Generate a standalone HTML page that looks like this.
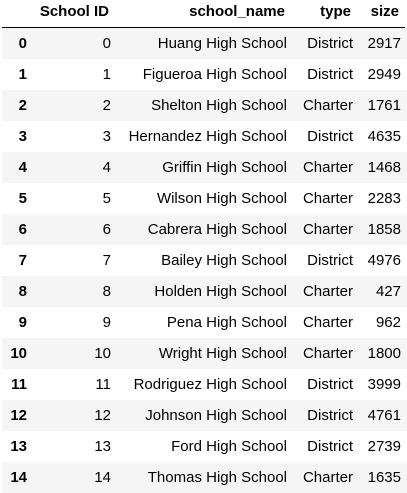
<!DOCTYPE html>
<html><head><style>
body{margin:0;background:#fff;font-family:"Liberation Sans",Arial,sans-serif;font-size:15px;color:#000;width:407px;height:490px;overflow:hidden;position:relative}
.row{position:absolute;left:2px;width:405px;height:31px;line-height:31px}
.g{background:#f5f5f5}
.row span{position:absolute;text-align:right;white-space:nowrap}
.h{font-weight:bold}
.c0{right:380px}.c1{right:296px}.c2{right:120px}.c3{right:54px}.c4{right:6px}
</style></head><body>
<div class="row h" style="top:-3px;height:30px;line-height:30px;border-bottom:1px solid #000;width:403px">
<span class="c1">School ID</span><span class="c2">school_name</span><span class="c3">type</span><span class="c4">size</span></div>
<div class="row g" style="top:28px"><span class="c0 h">0</span><span class="c1">0</span><span class="c2">Huang High School</span><span class="c3">District</span><span class="c4">2917</span></div>
<div class="row" style="top:59px"><span class="c0 h">1</span><span class="c1">1</span><span class="c2">Figueroa High School</span><span class="c3">District</span><span class="c4">2949</span></div>
<div class="row g" style="top:90px"><span class="c0 h">2</span><span class="c1">2</span><span class="c2">Shelton High School</span><span class="c3">Charter</span><span class="c4">1761</span></div>
<div class="row" style="top:121px"><span class="c0 h">3</span><span class="c1">3</span><span class="c2">Hernandez High School</span><span class="c3">District</span><span class="c4">4635</span></div>
<div class="row g" style="top:152px"><span class="c0 h">4</span><span class="c1">4</span><span class="c2">Griffin High School</span><span class="c3">Charter</span><span class="c4">1468</span></div>
<div class="row" style="top:183px"><span class="c0 h">5</span><span class="c1">5</span><span class="c2">Wilson High School</span><span class="c3">Charter</span><span class="c4">2283</span></div>
<div class="row g" style="top:214px"><span class="c0 h">6</span><span class="c1">6</span><span class="c2">Cabrera High School</span><span class="c3">Charter</span><span class="c4">1858</span></div>
<div class="row" style="top:245px"><span class="c0 h">7</span><span class="c1">7</span><span class="c2">Bailey High School</span><span class="c3">District</span><span class="c4">4976</span></div>
<div class="row g" style="top:276px"><span class="c0 h">8</span><span class="c1">8</span><span class="c2">Holden High School</span><span class="c3">Charter</span><span class="c4">427</span></div>
<div class="row" style="top:307px"><span class="c0 h">9</span><span class="c1">9</span><span class="c2">Pena High School</span><span class="c3">Charter</span><span class="c4">962</span></div>
<div class="row g" style="top:338px"><span class="c0 h">10</span><span class="c1">10</span><span class="c2">Wright High School</span><span class="c3">Charter</span><span class="c4">1800</span></div>
<div class="row" style="top:369px"><span class="c0 h">11</span><span class="c1">11</span><span class="c2">Rodriguez High School</span><span class="c3">District</span><span class="c4">3999</span></div>
<div class="row g" style="top:400px"><span class="c0 h">12</span><span class="c1">12</span><span class="c2">Johnson High School</span><span class="c3">District</span><span class="c4">4761</span></div>
<div class="row" style="top:431px"><span class="c0 h">13</span><span class="c1">13</span><span class="c2">Ford High School</span><span class="c3">District</span><span class="c4">2739</span></div>
<div class="row g" style="top:462px"><span class="c0 h">14</span><span class="c1">14</span><span class="c2">Thomas High School</span><span class="c3">Charter</span><span class="c4">1635</span></div>
</body></html>
